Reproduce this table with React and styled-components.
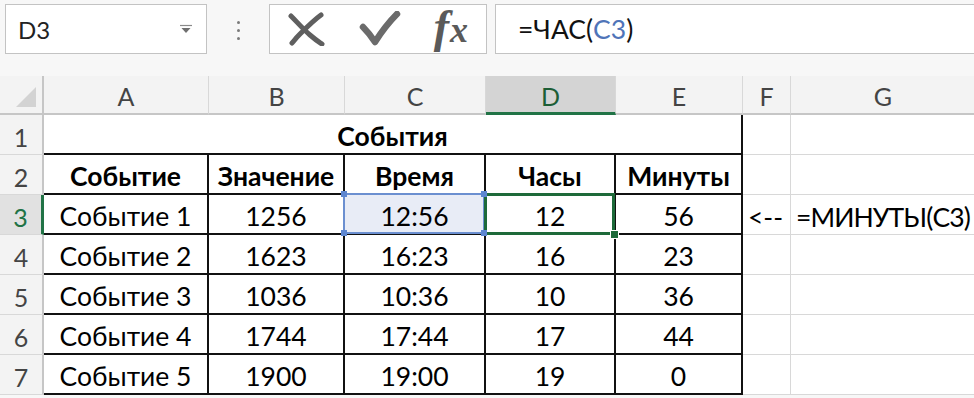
import React from 'react'
import styled, { createGlobalStyle, css } from 'styled-components'

const GlobalStyle = createGlobalStyle`
	html, body {
		margin: 0;
		padding: 0;
		background: #f7f7f7;
	}
	body {
		font-family: Lato, 'Liberation Sans', sans-serif;
	}
`

const columns = ['A', 'B', 'C', 'D', 'E', 'F', 'G']

const rows = [
	['Событие 1', '1256', '12:56', '12', '56'],
	['Событие 2', '1623', '16:23', '16', '23'],
	['Событие 3', '1036', '10:36', '10', '36'],
	['Событие 4', '1744', '17:44', '17', '44'],
	['Событие 5', '1900', '19:00', '19', '0'],
]

const heads = ['Событие', 'Значение', 'Время', 'Часы', 'Минуты']

function App() {
	return (
		<Page>
			<GlobalStyle />
			<FormulaBar>
				<NameBox>
					<span>D3</span>
					<svg width='14' height='10' viewBox='0 0 14 10'>
						<path d='M1 1.5h12' stroke='#8a8a8a' strokeWidth='1.2' />
						<path d='M2.5 4h9L7 9z' fill='#6f6f6f' />
					</svg>
				</NameBox>
				<Dots>
					<i />
					<i />
					<i />
				</Dots>
				<ActionGroup>
					<svg width='40' height='34' viewBox='0 0 40 34'>
						<path
							d='M4 4c6 6 12 13 19 19s9 7 12 9'
							stroke='#5f5f5f'
							strokeWidth='5'
							fill='none'
							strokeLinecap='round'
						/>
						<path
							d='M34 3c-7 5-15 13-21 19S7 29 5 31'
							stroke='#5f5f5f'
							strokeWidth='5'
							fill='none'
							strokeLinecap='round'
						/>
					</svg>
					<svg width='42' height='36' viewBox='0 0 42 36'>
						<path
							d='M4 16c4 4 8 9 12 15C23 20 31 10 38 3'
							stroke='#6b6b6b'
							strokeWidth='6.5'
							fill='none'
							strokeLinecap='round'
							strokeLinejoin='round'
						/>
					</svg>
					<FxLabel>
						<span>f</span>x
					</FxLabel>
				</ActionGroup>
				<FormulaInput>
					=ЧАС(<RefText>C3</RefText>)
				</FormulaInput>
			</FormulaBar>

			<Sheet>
				<Corner>
					<span />
				</Corner>
				{columns.map((c) => (
					<ColHead key={c} $active={c === 'D'}>
						{c}
					</ColHead>
				))}

				<RowHead>1</RowHead>
				<Cell $span={5} $bold $boxed>
					События
				</Cell>
				<Cell />
				<Cell />

				<RowHead>2</RowHead>
				{heads.map((h) => (
					<Cell key={h} $bold $boxed>
						{h}
					</Cell>
				))}
				<Cell />
				<Cell />

				{rows.map((r, i) => (
					<React.Fragment key={r[0]}>
						<RowHead $active={i === 0}>{i + 3}</RowHead>
						{r.map((v, j) => (
							<Cell key={j} $boxed $ref={i === 0 && j === 2}>
								{v}
								{i === 0 && j === 2 && (
									<>
										<RefFrame />
										<Handle $top $left />
										<Handle $top />
										<Handle $left />
										<Handle />
									</>
								)}
								{i === 0 && j === 3 && (
									<>
										<ActiveFrame />
										<FillHandle />
									</>
								)}
							</Cell>
						))}
						<Cell $left>{i === 0 ? '<--' : ''}</Cell>
						<Cell $left $tight>
							{i === 0 ? '=МИНУТЫ(C3)' : ''}
						</Cell>
					</React.Fragment>
				))}
			</Sheet>
		</Page>
	)
}

export default App

const Page = styled.div`
	width: 974px;
	height: 398px;
	overflow: hidden;
	background: #f7f7f7;
`

const FormulaBar = styled.div`
	display: flex;
	align-items: center;
	height: 50px;
	padding: 4px 0 0 5px;
`

const boxStyle = css`
	box-sizing: border-box;
	height: 50px;
	background: #fff;
	border: 1px solid #c3c3c3;
`

const NameBox = styled.div`
	${boxStyle};
	width: 202px;
	display: flex;
	align-items: center;
	justify-content: space-between;
	padding: 0 13px 0 12px;
	font-size: 24px;
	color: #222;
`

const Dots = styled.div`
	width: 62px;
	display: flex;
	flex-direction: column;
	align-items: center;
	gap: 5px;
	padding-top: 2px;

	i {
		width: 3px;
		height: 3px;
		border-radius: 50%;
		background: #7a7a7a;
	}
`

const ActionGroup = styled.div`
	${boxStyle};
	width: 218px;
	display: flex;
	align-items: center;
	justify-content: space-between;
	padding: 0 18px 0 17px;
`

const FxLabel = styled.div`
	font-family: 'Liberation Serif', 'DejaVu Serif', serif;
	font-style: italic;
	font-weight: 700;
	font-size: 36px;
	color: #5a5a5a;
	line-height: 1;
	padding-bottom: 4px;

	span {
		font-size: 46px;
		margin-right: 1px;
	}
`

const FormulaInput = styled.div`
	${boxStyle};
	flex: 1;
	margin-left: 8px;
	border-right: none;
	display: flex;
	align-items: center;
	padding-left: 22px;
	font-size: 26.5px;
	color: #111;
	white-space: pre;
`

const RefText = styled.span`
	color: #4f74b8;
`

const Sheet = styled.div`
	margin-top: 22px;
	display: grid;
	grid-template-columns: 44px 165px 136px 141px 130px 127px 48px 1fr;
	grid-template-rows: 39px repeat(7, 40px);
	background: #fff;
`

const headBase = css`
	box-sizing: border-box;
	display: flex;
	align-items: center;
	justify-content: center;
	font-size: 25px;
	background: #f3f3f3;
	color: #444;
`

const Corner = styled.div`
	${headBase};
	border-right: 2px solid #c6c6c6;
	border-bottom: 2px solid #c6c6c6;
	align-items: flex-end;
	justify-content: flex-end;
	padding: 0 6px 6px 0;

	span {
		width: 0;
		height: 0;
		border-left: 20px solid transparent;
		border-bottom: 20px solid #d3d3d3;
	}
`

const ColHead = styled.div`
	${headBase};
	padding-top: 3px;
	border-right: 1px solid #d8d8d8;
	border-bottom: ${(p) => (p.$active ? '3px solid #217346' : '2px solid #c6c6c6')};
	${(p) =>
		p.$active &&
		css`
			background: #d4d4d4;
			color: #1d5e36;
		`}
`

const RowHead = styled.div`
	${headBase};
	padding-top: 4px;
	border-bottom: 1px solid #d8d8d8;
	border-right: ${(p) => (p.$active ? '3px solid #217346' : '2px solid #c6c6c6')};
	${(p) =>
		p.$active &&
		css`
			background: #e1e1e1;
			color: #217346;
		`}
`

const Cell = styled.div`
	position: relative;
	box-sizing: border-box;
	display: flex;
	align-items: center;
	justify-content: ${(p) => (p.$left ? 'flex-start' : 'center')};
	padding: 4px ${(p) => (p.$left ? '5px' : '0')} 0;
	font-size: 26.5px;
	font-weight: ${(p) => (p.$bold ? 700 : 400)};
	letter-spacing: ${(p) => (p.$tight ? '-0.9px' : 'normal')};
	color: #000;
	white-space: nowrap;
	grid-column: ${(p) => (p.$span ? `span ${p.$span}` : 'auto')};
	background: ${(p) => (p.$ref ? '#e8ecf6' : '#fff')};
	border-right: ${(p) => (p.$boxed ? '2px solid #111' : '1px solid #d8d8d8')};
	border-bottom: ${(p) => (p.$boxed ? '2px solid #111' : '1px solid #d8d8d8')};
`

const RefFrame = styled.span`
	position: absolute;
	top: -2px;
	left: -2px;
	right: -1px;
	bottom: -1px;
	border: 2px solid #6b8fd0;
	z-index: 2;
	pointer-events: none;
`

const Handle = styled.span`
	position: absolute;
	width: 6px;
	height: 6px;
	background: #5d86d0;
	z-index: 4;
	${(p) => (p.$top ? 'top: -4px;' : 'bottom: -3px;')}
	${(p) => (p.$left ? 'left: -4px;' : 'right: -3px;')}
`

const ActiveFrame = styled.span`
	position: absolute;
	top: -2px;
	left: -2px;
	right: -1px;
	bottom: -2px;
	border: 3px solid #1e6a3a;
	z-index: 3;
	pointer-events: none;
`

const FillHandle = styled.span`
	position: absolute;
	right: -5px;
	bottom: -6px;
	width: 7px;
	height: 7px;
	background: #1e6a3a;
	border: 1px solid #fff;
	z-index: 4;
`
